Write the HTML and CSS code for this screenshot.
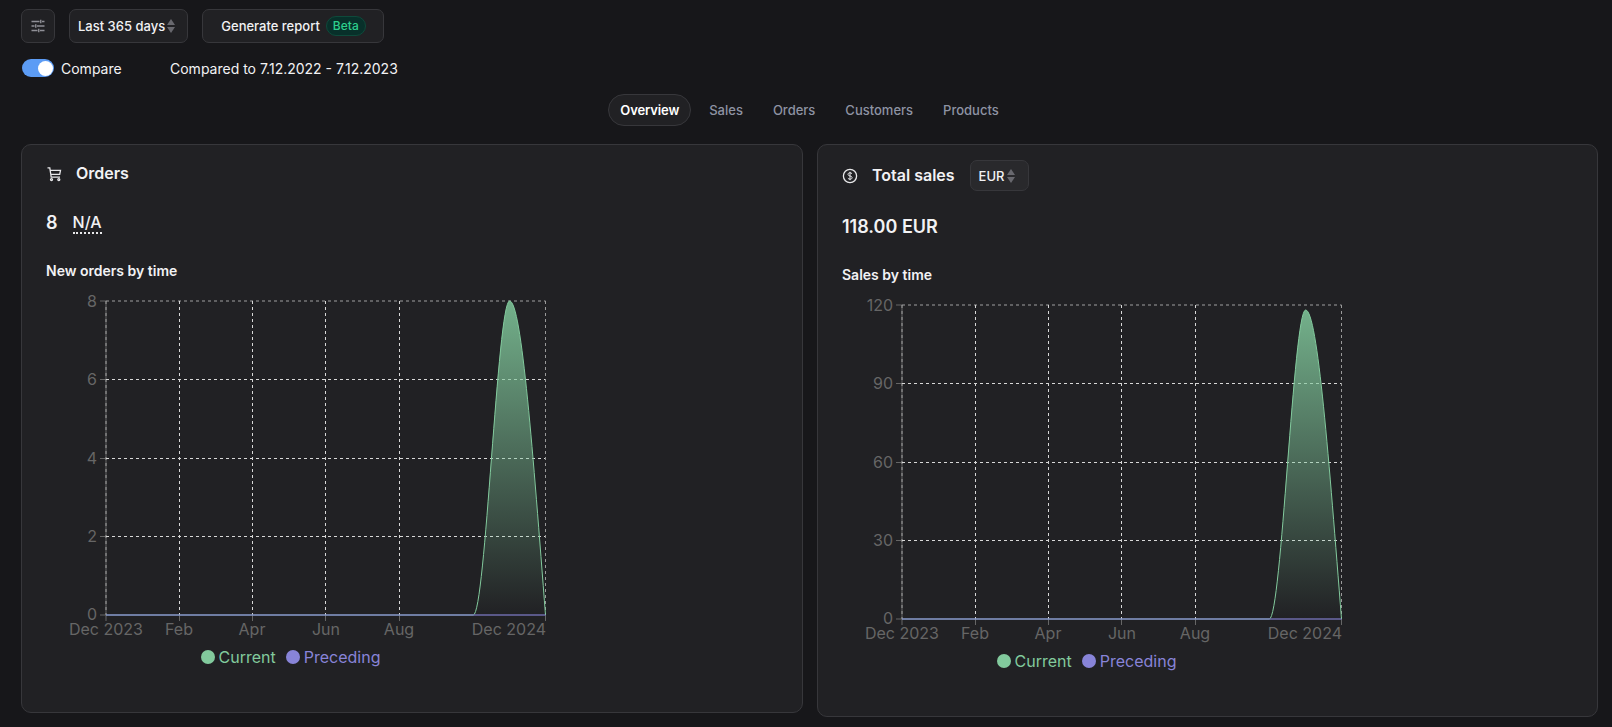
FILE: index.html
```html
<!DOCTYPE html>
<html>

<head>
    <meta charset="UTF-8">
    <title>Analytics</title>
    <link rel="stylesheet" href="styles.css">
</head>

<body>
    <div class="toolbar">
        <button class="btn icon-btn">
            <svg width="16" height="16" viewBox="0 0 16 16" fill="none" stroke="#8f8f96" stroke-width="1.400">
                <path d="M1.500 3.500h8M12 3.500h2.500M1.500 8h3M7 8h7.500M1.500 12.500h6M10 12.500h4.500" />
                <path d="M10.750 1.800v3.400M5.750 6.300v3.400M8.750 10.800v3.400" />
            </svg>
        </button>
        <div class="btn select">Last 365 days<span class="arrows"></span></div>
        <button class="btn report">Generate report<span class="beta">Beta</span></button>
    </div>

    <div class="compare-row">
        <label class="compare">
            <span class="toggle"><span class="knob"></span></span>
            Compare
        </label>
        <span class="compared-to">Compared to 7.12.2022 - 7.12.2023</span>
    </div>

    <div class="tabs">
        <a class="tab active">Overview</a>
        <a class="tab">Sales</a>
        <a class="tab">Orders</a>
        <a class="tab">Customers</a>
        <a class="tab">Products</a>
    </div>

    <div class="cards">
        <div class="card">
            <div class="card-head">
                <svg width="16" height="16" viewBox="0 0 16 16" fill="none" stroke="#e8e8ea" stroke-width="1.300">
                    <path d="M1.500 1.800h2.300l1.400 9.400h8.800M4 4.300h10.500l-.8 4H4.600" />
                    <circle cx="5.500" cy="13.600" r="1" />
                    <circle cx="12.800" cy="13.600" r="1" />
                </svg>
                <h3>Orders</h3>
            </div>
            <div class="stat">
                <span>8</span>
                <span class="na">N/A</span>
            </div>
            <h4>New orders by time</h4>
            <svg class="chart" width="500" height="362" viewBox="0 0 500 362">
                <defs>
                    <linearGradient id="fillLeft" x1="0" y1="0" x2="0" y2="1">
                        <stop offset="0" stop-color="#82ca9d" stop-opacity=".85" />
                        <stop offset="1" stop-color="#82ca9d" stop-opacity="0" />
                    </linearGradient>
                </defs>
                <path class="axis" d="M54 20h6M54 98.500h6M54 177.500h6M54 255.500h6M54 334h6M60 20v314M60 334v6M133.500 334v6M206.500 334v6M279.500 334v6M353.500 334v6M499.500 334v6" />
                <path class="grid-edge" d="M60 20H499.500M60 20V334" />
                <path class="grid" d="M60 98.500H499.500M60 177.500H499.500M60 255.500H499.500M133.500 20V334M206.500 20V334M279.500 20V334M353.500 20V334" />
                <path class="grid-end" d="M499.500 20V334" />
                <path d="M427.300 334C439.500 334 451.500 20 463.600 20C475.800 20 487.300 177 499.500 334Z" fill="url(#fillLeft)" />
                <path class="line-current" d="M60 334H427.300C439.500 334 451.500 20 463.600 20C475.800 20 487.300 177 499.500 334" />
                <path class="line-preceding" d="M60 334H499.500" />
                <text class="tick" x="51" y="26" text-anchor="end">8</text>
                <text class="tick" x="51" y="104" text-anchor="end">6</text>
                <text class="tick" x="51" y="183" text-anchor="end">4</text>
                <text class="tick" x="51" y="261" text-anchor="end">2</text>
                <text class="tick" x="51" y="339" text-anchor="end">0</text>
                <text class="tick" x="60" y="354" text-anchor="middle">Dec 2023</text>
                <text class="tick" x="133" y="354" text-anchor="middle">Feb</text>
                <text class="tick" x="206" y="354" text-anchor="middle">Apr</text>
                <text class="tick" x="280" y="354" text-anchor="middle">Jun</text>
                <text class="tick" x="353" y="354" text-anchor="middle">Aug</text>
                <text class="tick" x="500" y="354" text-anchor="end">Dec 2024</text>
            </svg>
            <div class="legend">
                <span class="current"><i></i>Current</span>
                <span class="preceding"><i></i>Preceding</span>
            </div>
        </div>

        <div class="card">
            <div class="card-head">
                <svg width="16" height="16" viewBox="0 0 16 16" fill="none" stroke="#e8e8ea" stroke-width="1.300">
                    <circle cx="8" cy="8" r="6.600" />
                    <path d="M10 5.700C9.500 5 8.700 4.800 8 4.800c-1.200 0-2 .6-2 1.600 0 2.200 4.100 1 4.100 3.200 0 1-.9 1.600-2.100 1.600-.8 0-1.600-.3-2.100-1M8 3.800v8.400" stroke-width="1" />
                </svg>
                <h3>Total sales</h3>
                <div class="btn select small">EUR<span class="arrows"></span></div>
            </div>
            <div class="stat">
                <span>118.00 EUR</span>
            </div>
            <h4>Sales by time</h4>
            <svg class="chart" width="500" height="362" viewBox="0 0 500 362">
                <defs>
                    <linearGradient id="fillRight" x1="0" y1="0" x2="0" y2="1">
                        <stop offset="0" stop-color="#82ca9d" stop-opacity=".85" />
                        <stop offset="1" stop-color="#82ca9d" stop-opacity="0" />
                    </linearGradient>
                </defs>
                <path class="axis" d="M54 20h6M54 98.500h6M54 177.500h6M54 255.500h6M54 334h6M60 20v314M60 334v6M133.500 334v6M206.500 334v6M279.500 334v6M353.500 334v6M499.500 334v6" />
                <path class="grid-edge" d="M60 20H499.500M60 20V334" />
                <path class="grid" d="M60 98.500H499.500M60 177.500H499.500M60 255.500H499.500M133.500 20V334M206.500 20V334M279.500 20V334M353.500 20V334" />
                <path class="grid-end" d="M499.500 20V334" />
                <path d="M427.300 334C439.500 334 451.500 25 463.600 25C475.800 25 487.300 180 499.500 334Z" fill="url(#fillRight)" />
                <path class="line-current" d="M60 334H427.300C439.500 334 451.500 25 463.600 25C475.800 25 487.300 180 499.500 334" />
                <path class="line-preceding" d="M60 334H499.500" />
                <text class="tick" x="51" y="26" text-anchor="end">120</text>
                <text class="tick" x="51" y="104" text-anchor="end">90</text>
                <text class="tick" x="51" y="183" text-anchor="end">60</text>
                <text class="tick" x="51" y="261" text-anchor="end">30</text>
                <text class="tick" x="51" y="339" text-anchor="end">0</text>
                <text class="tick" x="60" y="354" text-anchor="middle">Dec 2023</text>
                <text class="tick" x="133" y="354" text-anchor="middle">Feb</text>
                <text class="tick" x="206" y="354" text-anchor="middle">Apr</text>
                <text class="tick" x="280" y="354" text-anchor="middle">Jun</text>
                <text class="tick" x="353" y="354" text-anchor="middle">Aug</text>
                <text class="tick" x="500" y="354" text-anchor="end">Dec 2024</text>
            </svg>
            <div class="legend">
                <span class="current"><i></i>Current</span>
                <span class="preceding"><i></i>Preceding</span>
            </div>
        </div>
    </div>
</body>

</html>
```

FILE: styles.css
```css
body {
    background-color: #17171a;
    color: #f2f2f4;
    font-family: "Inter", "Liberation Sans", sans-serif;
    font-size: 14px;
    margin: 0;
    padding: 9px 14px 0 21px;
    overflow: hidden;
}

.toolbar {
    display: flex;
    gap: 14px;
}

.btn {
    background-color: #212124;
    border: 1px solid #37373b;
    border-radius: 7px;
    box-sizing: border-box;
    color: #f2f2f4;
    font-family: inherit;
    font-size: 13px;
    font-weight: 500;
    height: 34px;
    display: flex;
    align-items: center;
}

.icon-btn {
    width: 34px;
    justify-content: center;
    padding: 0;
}

.select {
    padding: 0 8px;
    width: 119px;
}

.select.small {
    background-color: #29292c;
    width: 59px;
    height: 31px;
    margin-left: 1px;
    font-size: 13px;
}

.arrows {
    display: inline-flex;
    flex-direction: column;
    gap: 2px;
    margin-left: 2px;
}

.arrows::before,
.arrows::after {
    content: "";
    border-left: 4px solid transparent;
    border-right: 4px solid transparent;
}

.arrows::before {
    border-bottom: 6px solid #68686e;
}

.arrows::after {
    border-top: 6px solid #68686e;
}

.report {
    width: 182px;
    justify-content: center;
    gap: 6px;
    padding: 0 0 0 1px;
}

.beta {
    background-color: #08302a;
    border: 1px solid #0e4a3b;
    border-radius: 10px;
    color: #2dcf8c;
    font-size: 12px;
    line-height: 18px;
    padding: 0 6px;
}

.compare-row {
    display: flex;
    align-items: center;
    height: 20px;
    margin-top: 15px;
}

.compare {
    display: flex;
    align-items: center;
    gap: 7px;
    width: 149px;
}

.toggle {
    background-color: #5c9cf5;
    border-radius: 9px;
    box-sizing: border-box;
    display: flex;
    justify-content: flex-end;
    align-items: center;
    height: 18px;
    margin-left: 1px;
    padding-right: 1px;
    width: 32px;
}

.knob {
    background-color: #fff;
    border-radius: 50%;
    height: 15px;
    width: 15px;
}

.tabs {
    display: flex;
    justify-content: center;
    gap: 6px;
    height: 32px;
    margin-top: 16px;
}

.tab {
    border: 1px solid transparent;
    border-radius: 16px;
    color: #8e93a3;
    font-size: 13px;
    font-weight: 500;
    line-height: 30px;
    padding: 0 11px;
}

.tab.active {
    background-color: #212124;
    border-color: #37373b;
    color: #fff;
    font-weight: 600;
    letter-spacing: -.12px;
}

.cards {
    display: grid;
    grid-template-columns: 782px 781px;
    gap: 14px;
    align-items: start;
    margin-top: 18px;
}

.card {
    background-color: #212124;
    border: 1px solid #37373b;
    border-radius: 10px;
    padding: 15px 24px 45px;
}

.card-head {
    display: flex;
    align-items: center;
    gap: 14px;
    min-height: 27px;
}

h3 {
    font-size: 16px;
    font-weight: 600;
    line-height: 27px;
    margin: 0;
}

.stat {
    display: flex;
    gap: 15px;
    font-size: 18px;
    font-weight: 600;
    line-height: 28px;
    margin-top: 22px;
}

.na {
    font-size: 16px;
    font-weight: 500;
    border-bottom: 2px dotted #e8e8ea;
    line-height: 20px;
    height: 20px;
    margin-top: 3px;
}

h4 {
    font-size: 14px;
    font-weight: 600;
    line-height: 20px;
    margin: 24px 0 0;
}

.chart {
    display: block;
}

.axis {
    fill: none;
    stroke: #666;
}

.grid {
    fill: none;
    stroke: #d8d8d8;
    stroke-dasharray: 3 3;
}

.grid-edge {
    fill: none;
    stroke: #a0a0a0;
    stroke-dasharray: 3 3;
}

.grid-end {
    fill: none;
    stroke: #9a9a9a;
    stroke-dasharray: 3 3;
}

.line-current {
    fill: none;
    stroke: #82ca9d;
}

.line-preceding {
    fill: none;
    stroke: #8884d8;
    stroke-opacity: .75;
    stroke-width: 1.500;
}

.tick {
    fill: #666;
    font-size: 16px;
}

.legend {
    display: flex;
    justify-content: center;
    gap: 10px;
    font-size: 16px;
    line-height: 20px;
    margin-top: 4px;
    width: 489px;
}

.legend span {
    display: flex;
    align-items: center;
    gap: 4px;
}

.legend i {
    border-radius: 50%;
    height: 14px;
    width: 14px;
}

.current {
    color: #82ca9d;
}

.current i {
    background-color: #82ca9d;
}

.preceding {
    color: #8884d8;
}

.preceding i {
    background-color: #8884d8;
}
```
